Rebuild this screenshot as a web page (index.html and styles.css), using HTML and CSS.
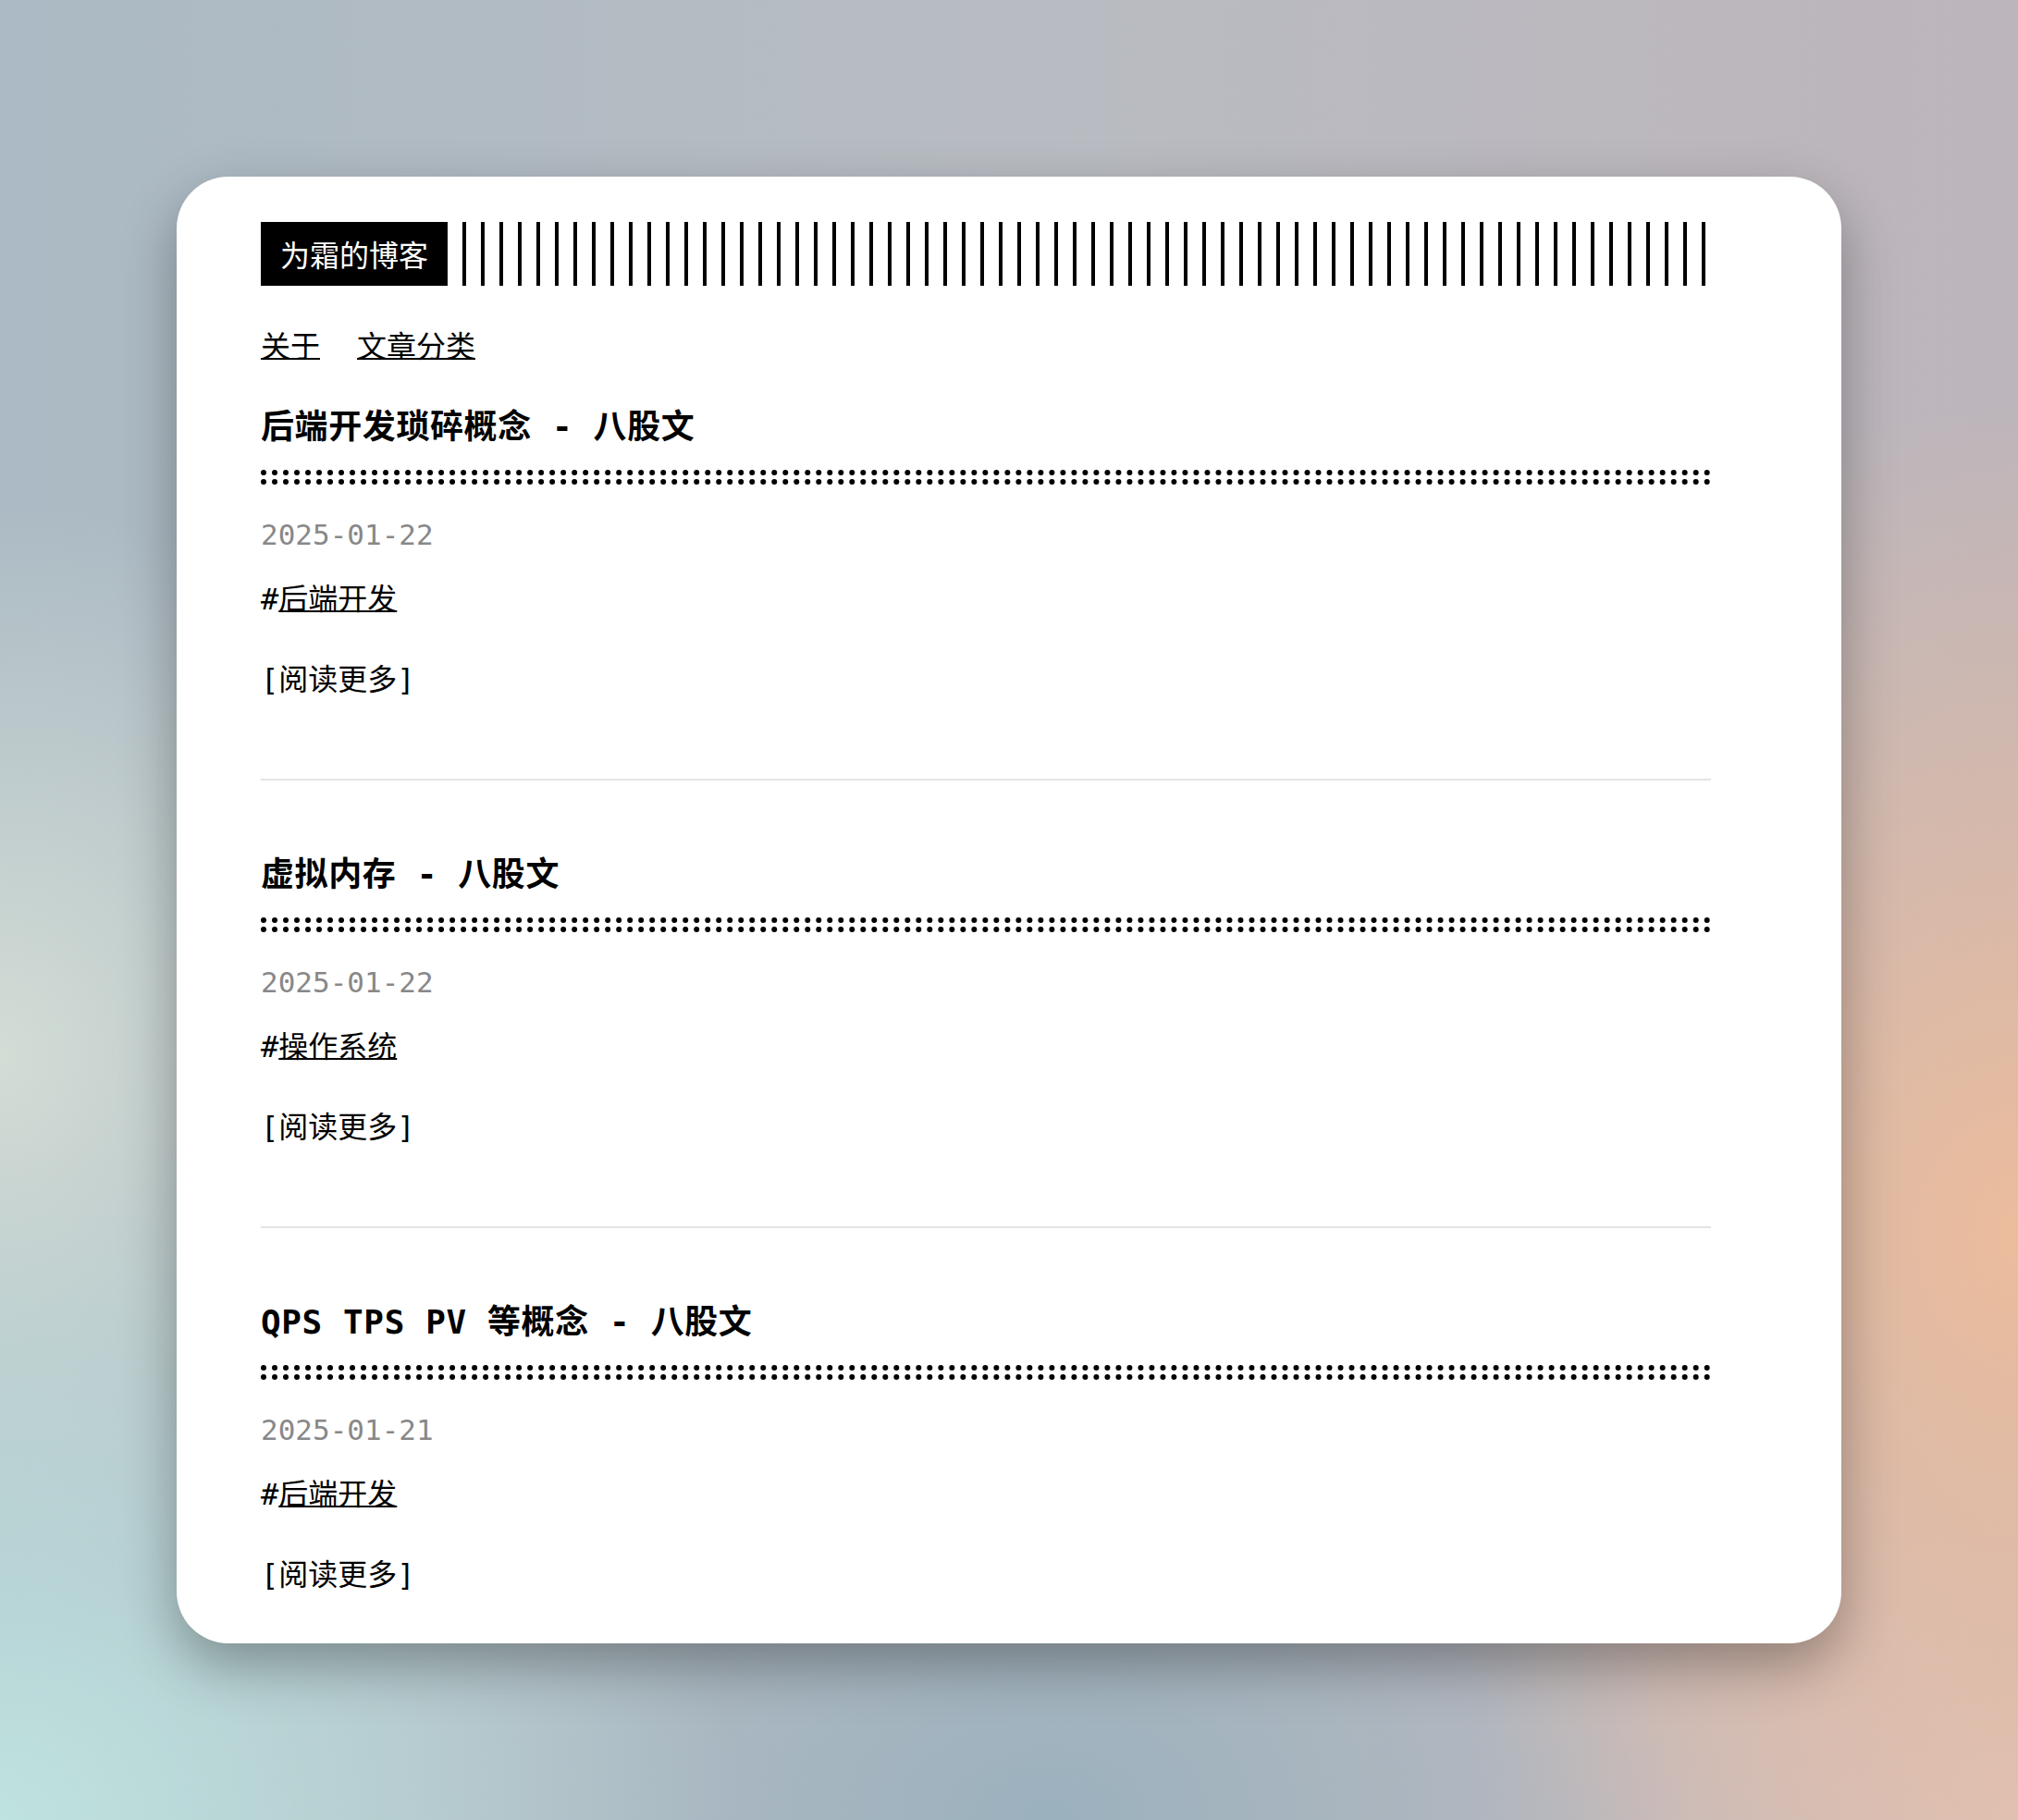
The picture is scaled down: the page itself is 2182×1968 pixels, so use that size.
FILE: index.html
```html
<!DOCTYPE html>
<html lang="zh-CN">
<head>
<meta charset="utf-8">
<title>为霜的博客</title>
<link rel="stylesheet" href="styles.css">
</head>
<body>
<div class="card">
  <header class="header">
    <a class="logo" href="#">为霜的博客</a>
    <div class="bars"></div>
  </header>
  <nav class="menu">
    <a href="#">关于</a>
    <a href="#">文章分类</a>
  </nav>
  <main class="posts">
    <article class="post">
      <h1 class="post-title">后端开发琐碎概念 - 八股文</h1>
      <div class="post-meta">2025-01-22</div>
      <div class="post-tags">#<a href="#">后端开发</a></div>
      <div class="read-more"><a href="#">[阅读更多]</a></div>
    </article>
    <article class="post">
      <h1 class="post-title">虚拟内存 - 八股文</h1>
      <div class="post-meta">2025-01-22</div>
      <div class="post-tags">#<a href="#">操作系统</a></div>
      <div class="read-more"><a href="#">[阅读更多]</a></div>
    </article>
    <article class="post">
      <h1 class="post-title">QPS TPS PV 等概念 - 八股文</h1>
      <div class="post-meta">2025-01-21</div>
      <div class="post-tags">#<a href="#">后端开发</a></div>
      <div class="read-more"><a href="#">[阅读更多]</a></div>
    </article>
  </main>
</div>
</body>
</html>
```

FILE: styles.css
```css
html, body {
  margin: 0;
  padding: 0;
}
body {
  width: 2182px;
  height: 1968px;
  display: flex;
  align-items: center;
  justify-content: center;
  font-family: "DejaVu Sans Mono", "Noto Sans CJK SC", monospace;
  font-size: 32px;
  color: #000;
  background:
    radial-gradient(ellipse 700px 900px at 100% 68%, #ecbc9c 0%, rgba(236,188,156,0) 100%),
    radial-gradient(ellipse 800px 700px at 0% 100%, #bfe3e0 0%, rgba(191,227,224,0) 100%),
    radial-gradient(ellipse 500px 600px at 0% 58%, #d3ddd6 0%, rgba(211,221,214,0) 100%),
    radial-gradient(ellipse 700px 500px at 52% 100%, #9bb1be 0%, rgba(155,177,190,0) 100%),
    radial-gradient(ellipse 600px 500px at 100% 100%, #dcc2b8 0%, rgba(220,194,184,0) 100%),
    linear-gradient(90deg, #abbac4 0%, #b8bcc2 50%, #bdb5bb 100%);
}
.card {
  box-sizing: border-box;
  width: 1800px;
  padding: 49px 141px 50px 91px;
  background: #fff;
  border-radius: 56px;
  box-shadow: 0 24px 60px rgba(0, 0, 0, 0.32);
}
a {
  color: #000;
}
.header {
  display: flex;
  height: 69px;
}
.logo {
  display: flex;
  align-items: center;
  padding: 0 21px;
  background: #000;
  color: #fff;
  text-decoration: none;
  font-family: "Noto Sans CJK SC", sans-serif;
  font-size: 32px;
  line-height: 49px;
}
.bars {
  flex: 1;
  margin-left: 16px;
  background: repeating-linear-gradient(90deg, #000 0, #000 4px, transparent 4px, transparent 20px);
}
.menu {
  display: flex;
  gap: 40px;
  margin-top: 39px;
  line-height: 48px;
  font-family: "Noto Sans CJK SC", sans-serif;
}
.menu a, .post-tags a {
  text-decoration-thickness: 2px;
}
.posts {
  margin-top: 39px;
}
.post:not(:last-child) {
  padding-bottom: 83px;
  border-bottom: 2px solid #e4e4e4;
  margin-bottom: 75px;
}
.post-title {
  position: relative;
  margin: 0 0 30px;
  padding-bottom: 29px;
  border-bottom: 6px dotted #000;
  font-size: 36px;
  letter-spacing: 0.6px;
  line-height: 54px;
  font-weight: 700;
}
.post-title::after {
  content: "";
  position: absolute;
  left: 0;
  bottom: 4px;
  width: 100%;
  border-bottom: 6px dotted #000;
}
.post-meta {
  font-size: 31px;
  line-height: 48px;
  color: #888;
}
.post-tags {
  margin-top: 22px;
  line-height: 48px;
}
.read-more {
  margin-top: 39px;
  line-height: 48px;
}
.read-more a {
  text-decoration: none;
}
```
